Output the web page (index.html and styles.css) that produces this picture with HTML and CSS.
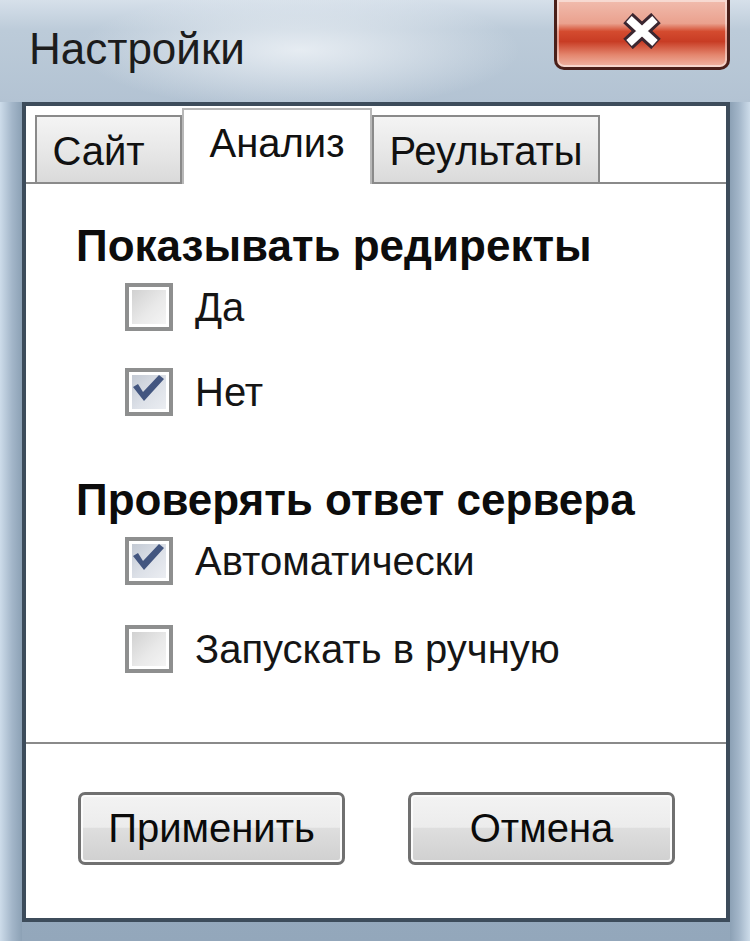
FILE: index.html
```html
<!DOCTYPE html>
<html lang="ru">

<head>
    <meta charset="UTF-8">
    <meta name="viewport" content="width=device-width, initial-scale=1.0">
    <title>Настройки</title>
    <link rel="stylesheet" href="styles.css">
</head>

<body>
    <div class="window">
        <header class="titlebar">
            <span class="title">Настройки</span>
            <div class="close">
                <svg width="42" height="36" viewBox="0 0 42 36">
                    <path d="M7 5 L35 31 M35 5 L7 31" stroke="#3b2630" stroke-width="14" fill="none" />
                    <path d="M8 6 L34 30 M34 6 L8 30" stroke="#ffffff" stroke-width="8" fill="none" />
                </svg>
            </div>
        </header>
        <div class="client">
            <div class="tabs">
                <div class="tab tab-site">Сайт</div>
                <div class="tab active tab-analysis">Анализ</div>
                <div class="tab tab-results">Реультаты</div>
            </div>
            <div class="panel">
                <div class="group-title">Показывать редиректы</div>
                <div class="option first">
                    <span class="box"></span>
                    <span>Да</span>
                </div>
                <div class="option">
                    <span class="box checked">
                        <svg width="40" height="40" viewBox="0 0 40 40">
                            <polygon points="4,15 9,12 14,20 30,3 35,7 15,29" fill="#435680" />
                        </svg>
                    </span>
                    <span>Нет</span>
                </div>
                <div class="group-title second">Проверять ответ сервера</div>
                <div class="option first">
                    <span class="box checked">
                        <svg width="40" height="40" viewBox="0 0 40 40">
                            <polygon points="4,15 9,12 14,20 30,3 35,7 15,29" fill="#435680" />
                        </svg>
                    </span>
                    <span>Автоматически</span>
                </div>
                <div class="option last">
                    <span class="box"></span>
                    <span>Запускать в ручную</span>
                </div>
            </div>
            <div class="footer">
                <button class="btn">Применить</button>
                <button class="btn">Отмена</button>
            </div>
        </div>
    </div>
</body>

</html>
```

FILE: styles.css
```css
* {
    margin: 0;
    padding: 0;
    box-sizing: border-box;
}

body {
    font-family: 'Liberation Sans', Arial, sans-serif;
    background-color: #b5c6d6;
}

.window {
    width: 750px;
    height: 941px;
    display: flex;
    flex-direction: column;
    background:
        linear-gradient(to right, #cddcea, #a3b6c9 55%, #8ca1b5 100%) left top / 22px 100% no-repeat,
        linear-gradient(to left, #cddcea, #a3b6c9 55%, #8ca1b5 100%) right top / 20px 100% no-repeat,
        linear-gradient(#b9c9d8, #93a7bb);
}

.titlebar {
    height: 102px;
    display: flex;
    align-items: flex-start;
    background:
        radial-gradient(ellipse 220px 60px at 300px 50px, rgba(235, 240, 245, 0.9), rgba(235, 240, 245, 0) 100%),
        linear-gradient(#d6e0ea, #bccbd9 30%, #b3c3d3);
}

.title {
    flex: 1;
    padding: 27px 0 0 29px;
    font-size: 44px;
    line-height: 44px;
    color: #1c1c1c;
}

.close {
    width: 176px;
    height: 70px;
    margin-right: 20px;
    display: flex;
    align-items: center;
    justify-content: center;
    padding-bottom: 6px;
    border: 3px solid #4a1f19;
    border-top: none;
    border-radius: 0 0 10px 10px;
    background: linear-gradient(#f1bcae 0%, #eaa18e 35%, #d44b2f 47%, #c83c24 62%, #e4866e 82%, #f0b6a5 100%);
    box-shadow: inset 0 0 0 2px rgba(255, 255, 255, 0.45);
}

.client {
    width: 708px;
    height: 820px;
    margin-left: 22px;
    border: 4px solid #3d4c5b;
    background-color: #ffffff;
    display: flex;
    flex-direction: column;
}

.tabs {
    height: 76px;
    flex-shrink: 0;
    display: flex;
    align-items: flex-end;
    padding-left: 9px;
}

.tab {
    height: 67px;
    padding-top: 11px;
    font-size: 40px;
    line-height: 46px;
    color: #111111;
    text-align: center;
    border: 2px solid #8a8a8a;
    border-bottom: none;
    background: linear-gradient(#f4f4f4, #e8e8e8 50%, #dadada);
}

.tab.active {
    position: relative;
    height: 76px;
    margin-bottom: -2px;
    padding-top: 10px;
    border-color: #b8b8b8;
    background: #ffffff;
}

.tab-site {
    width: 147px;
    padding-right: 20px;
}

.tab-analysis {
    width: 190px;
}

.tab-results {
    width: 228px;
}

.panel {
    height: 562px;
    flex-shrink: 0;
    padding: 37px 0 0 50px;
    border-top: 2px solid #8a8a8a;
    border-bottom: 2px solid #8a8a8a;
}

.group-title {
    font-size: 44px;
    line-height: 50px;
    font-weight: bold;
    color: #0c0c0c;
}

.group-title.second {
    margin-top: 59px;
}

.option {
    display: flex;
    align-items: center;
    gap: 22px;
    height: 48px;
    margin: 37px 0 0 49px;
    font-size: 40px;
    line-height: 48px;
    color: #151515;
}

.option.first {
    margin-top: 12px;
}

.option.last {
    margin-top: 40px;
}

.box {
    width: 48px;
    height: 48px;
    flex-shrink: 0;
    border: 4px solid #8e8f8f;
    background: linear-gradient(135deg, #cdcdcd, #e9e9e9 55%, #f7f7f7);
    box-shadow: inset 0 0 0 3px #ffffff;
}

.box.checked {
    background: linear-gradient(135deg, #bfc6d1, #dde1e8 55%, #eef0f4);
}

.box svg {
    display: block;
}

.footer {
    flex: 1;
    display: flex;
    justify-content: space-between;
    align-items: flex-start;
    padding: 48px 51px 0 52px;
}

.btn {
    width: 267px;
    height: 73px;
    font-family: 'Liberation Sans', Arial, sans-serif;
    font-size: 40px;
    color: #0a0a0a;
    border: 3px solid #707070;
    border-radius: 7px;
    background: linear-gradient(#f3f3f3 0%, #ececec 48%, #dedede 50%, #d0d0d0 100%);
    box-shadow: inset 0 0 0 2px #fbfbfb;
}
```
